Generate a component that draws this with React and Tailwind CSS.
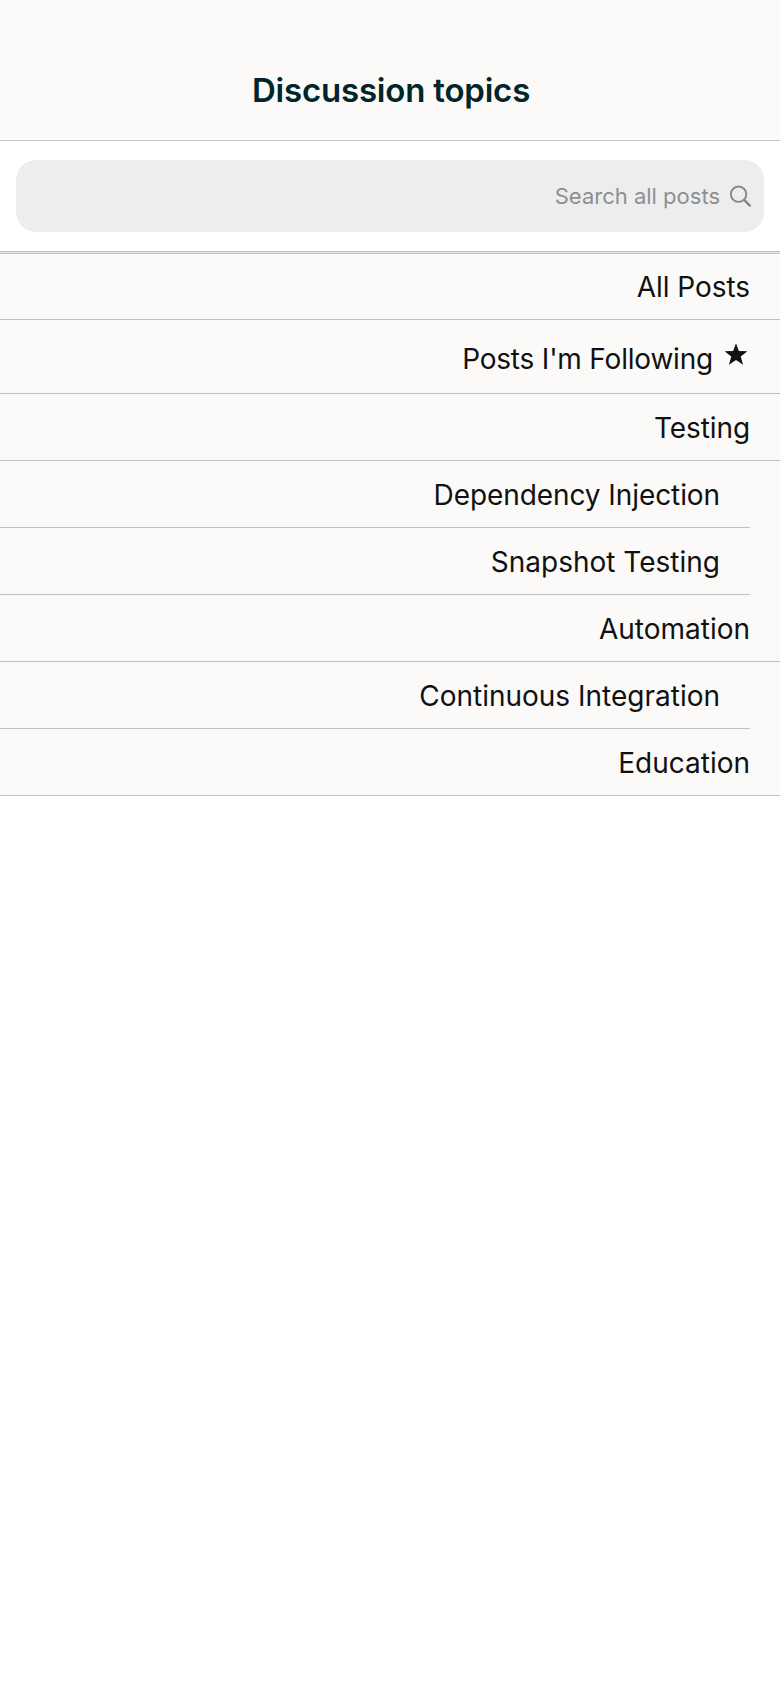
const topics = [
  { label: 'All Posts', row: 'h-[66px]', text: 'pt-[16px] tracking-[-0.05px]' },
  { label: "Posts I'm Following", row: 'h-[74px]', text: 'pt-[22px] tracking-[-0.2px]', starred: true },
  { label: 'Testing', text: 'pt-[17px] tracking-[-0.1px]' },
  { label: 'Dependency Injection', text: 'pt-[17px] tracking-[-0.08px]', nested: true },
  { label: 'Snapshot Testing', nested: true },
  { label: 'Automation' },
  { label: 'Continuous Integration', nested: true },
  { label: 'Education' },
];

function Star() {
  return (
    <svg className="mt-[23px] mr-[2px] ml-[11px] h-[22px] w-[24px]" viewBox="0 0 24 22" fill="#111">
      <path d="M12 0.2 L14.8 8 L23.4 8.3 L16.7 13.4 L19.1 21.7 L12 17 L4.9 21.7 L7.3 13.4 L0.6 8.3 L9.2 8 Z" />
    </svg>
  );
}

function Topic({ label, nested, starred, row = 'h-[67px]', text = 'pt-[17px]' }) {
  return (
    <li className={`flex bg-[#fbfaf8] ${row} ${nested ? 'pr-[30px]' : ''}`}>
      <div className="flex flex-1 items-start justify-end border-b border-[#c2c1c0] pr-[30px]">
        <span className={`text-[28px] leading-[34px] whitespace-nowrap text-[#111] ${text}`}>{label}</span>
        {starred && <Star />}
      </div>
    </li>
  );
}

export default function App() {
  return (
    <div className="min-h-[1688px] w-full bg-white font-['Inter',sans-serif]">
      <header className="h-[141px] border-b border-[#c8c7c6] bg-[#fbfaf8] pt-[70px] text-center">
        <h1 className="pl-[2px] text-[33px] leading-[40px] font-semibold tracking-[-0.2px] text-[#00262b]">
          Discussion topics
        </h1>
      </header>
      <div className="h-[110px] px-4 pt-[19px]">
        <div className="flex h-[72px] items-center justify-end rounded-[20px] bg-[#ededed] pr-[13px]">
          <span className="text-[22px] leading-[28px] text-[#8e8e93]">Search all posts</span>
          <svg className="ml-[9px] h-[22px] w-[22px]" viewBox="0 0 22 22" fill="none" stroke="#868686">
            <circle cx="9.6" cy="9.2" r="7.7" strokeWidth="1.9" />
            <path d="M15.2 14.8 L20.8 20.6" strokeWidth="2.4" strokeLinecap="round" />
          </svg>
        </div>
      </div>
      <div className="h-[3px] border-y border-[#c4c4c4] bg-[#e4e4e4]" />
      <ul>
        {topics.map((topic) => (
          <Topic key={topic.label} {...topic} />
        ))}
      </ul>
    </div>
  );
}
